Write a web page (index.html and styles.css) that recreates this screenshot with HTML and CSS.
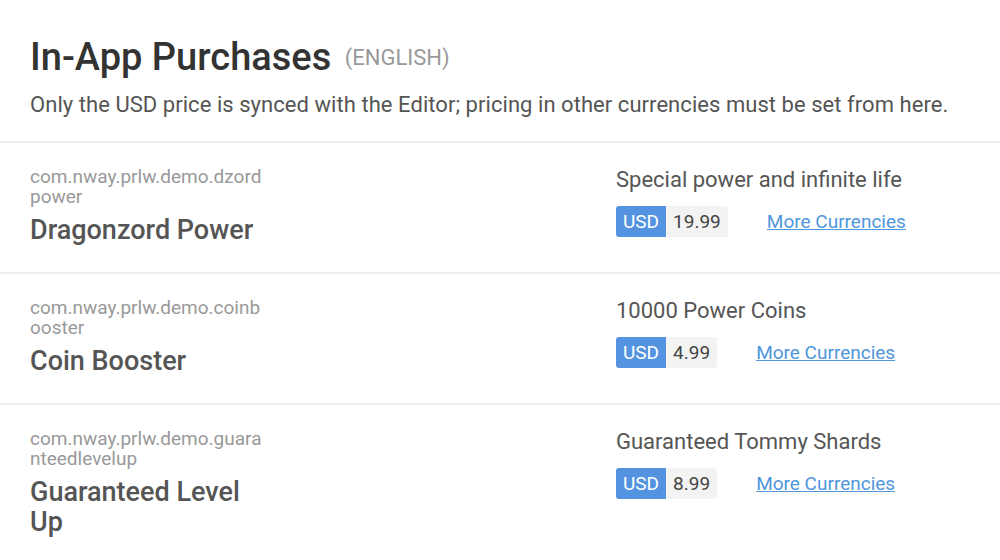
FILE: index.html
```html
<!DOCTYPE html>
<html>
<head>
<meta charset="utf-8">
<link rel="stylesheet" href="styles.css">
</head>
<body>
<div class="header">
  <h1 class="title">In-App Purchases <span class="lang">(ENGLISH)</span></h1>
  <p class="note">Only the USD price is synced with the Editor; pricing in other currencies must be set from here.</p>
</div>
<div class="row">
  <div class="left">
    <div class="pid">com.nway.prlw.demo.dzordpower</div>
    <div class="name">Dragonzord Power</div>
  </div>
  <div class="right">
    <div class="desc">Special power and infinite life</div>
    <div class="price-line">
      <div class="price"><span class="cur">USD</span><span class="amt">19.99</span></div>
      <a class="more" href="#">More Currencies</a>
    </div>
  </div>
</div>
<div class="row">
  <div class="left">
    <div class="pid">com.nway.prlw.demo.coinbooster</div>
    <div class="name">Coin Booster</div>
  </div>
  <div class="right">
    <div class="desc">10000 Power Coins</div>
    <div class="price-line">
      <div class="price"><span class="cur">USD</span><span class="amt">4.99</span></div>
      <a class="more" href="#">More Currencies</a>
    </div>
  </div>
</div>
<div class="row">
  <div class="left">
    <div class="pid">com.nway.prlw.demo.guaranteedlevelup</div>
    <div class="name">Guaranteed Level Up</div>
  </div>
  <div class="right">
    <div class="desc">Guaranteed Tommy Shards</div>
    <div class="price-line">
      <div class="price"><span class="cur">USD</span><span class="amt">8.99</span></div>
      <a class="more" href="#">More Currencies</a>
    </div>
  </div>
</div>
</body>
</html>
```
FILE: styles.css
```css
html, body {
  margin: 0;
  padding: 0;
  background: #fff;
  font-family: Roboto, "Liberation Sans", sans-serif;
}
.header {
  padding: 34px 30px 22px;
  border-bottom: 2px solid #eeeeee;
}
.title {
  margin: 0;
  font-size: 38px;
  font-weight: 500;
  color: #333;
  line-height: 46px;
}
.lang {
  font-size: 22px;
  font-weight: 400;
  color: #999;
  margin-left: 4px;
  vertical-align: 5px;
}
.note {
  margin: 10px 0 0;
  font-size: 22px;
  line-height: 28px;
  color: #555;
  letter-spacing: 0.05px;
}
.row {
  display: grid;
  grid-template-columns: 586px 1fr;
  padding: 24px 30px 27px;
  border-bottom: 2px solid #eeeeee;
}
.left {
  width: 236px;
}
.pid {
  font-size: 19px;
  line-height: 20px;
  color: #999;
  word-break: break-all;
}
.name {
  margin-top: 8px;
  font-size: 27px;
  line-height: 30px;
  font-weight: 500;
  color: #555;
}
.desc {
  font-size: 22px;
  line-height: 26px;
  color: #555;
}
.price-line {
  display: flex;
  align-items: center;
  margin-top: 13px;
}
.price {
  display: flex;
  height: 31px;
  border-radius: 3px;
  overflow: hidden;
  background: #f3f3f3;
}
.cur {
  background: #5393e0;
  color: #fff;
  font-size: 19px;
  line-height: 31px;
  padding: 0 7px;
}
.amt {
  font-size: 19px;
  line-height: 31px;
  color: #444;
  padding: 0 7px;
}
.more {
  margin-left: 39px;
  font-size: 19px;
  color: #5096dc;
  text-decoration: underline;
}
```
